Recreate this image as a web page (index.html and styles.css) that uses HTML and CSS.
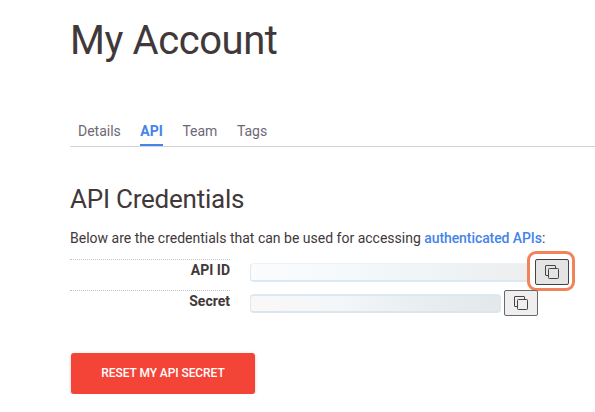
FILE: index.html
```html
<!DOCTYPE html>
<html lang="en">
<head>
<meta charset="utf-8">
<title>My Account</title>
<link rel="stylesheet" href="styles.css">
</head>
<body>
<main class="page">
  <h1 class="title">My Account</h1>
  <nav class="tabs">
    <a class="tab">Details</a>
    <a class="tab active">API</a>
    <a class="tab">Team</a>
    <a class="tab">Tags</a>
  </nav>
  <h2 class="subtitle">API Credentials</h2>
  <p class="intro">Below are the credentials that can be used for accessing <a class="link">authenticated APIs</a>:</p>
  <dl class="credentials">
    <dt class="label">API ID</dt>
    <dd class="value">
      <span class="masked masked-id"></span>
      <button class="copy pressed" aria-label="Copy API ID">
        <svg width="14" height="14" viewBox="0 0 14 14"><path d="M3.5 10.5H1a.5.5 0 0 1-.5-.5V1a.5.5 0 0 1 .5-.5h9a.5.5 0 0 1 .5.5v2.500"/><rect x="3.500" y="3.500" width="10" height="10" rx="0.800"/></svg>
        <span class="highlight"></span>
      </button>
    </dd>
    <dt class="label">Secret</dt>
    <dd class="value">
      <span class="masked masked-secret"></span>
      <button class="copy" aria-label="Copy secret">
        <svg width="14" height="14" viewBox="0 0 14 14"><path d="M3.5 10.5H1a.5.5 0 0 1-.5-.5V1a.5.5 0 0 1 .5-.5h9a.5.5 0 0 1 .5.5v2.500"/><rect x="3.500" y="3.500" width="10" height="10" rx="0.800"/></svg>
      </button>
    </dd>
  </dl>
  <button class="reset">RESET MY API SECRET</button>
</main>
</body>
</html>
```

FILE: styles.css
```css
* { box-sizing: border-box; }
body {
  margin: 0;
  background: #fff;
  color: #413839;
  font: 14px/20px Roboto, sans-serif;
  overflow: hidden;
}
.page { padding: 17px 0 0 70px; }
.title {
  margin: 0 0 56px;
  font-size: 40px;
  line-height: 48px;
  font-weight: 400;
  letter-spacing: -0.43px;
}
.tabs {
  display: flex;
  gap: 19.5px;
  height: 26px;
  padding-left: 8px;
  border-bottom: 1px solid #d4d4d4;
  color: #6c6874;
}
.tab { height: 25px; }
.active {
  color: #4484ea;
  font-weight: 700;
  border-bottom: 2px solid #4484ea;
}
.subtitle {
  margin: 36px 0 13px;
  font-size: 26px;
  line-height: 32px;
  font-weight: 400;
  letter-spacing: -0.23px;
}
.intro { margin: 0; }
.link { color: #4484ea; font-weight: 500; letter-spacing: -0.08px; }
.credentials {
  display: grid;
  grid-template-columns: 160px auto;
  grid-auto-rows: 31px;
  column-gap: 20px;
  margin: 11px 0 32px;
}
.label {
  height: 22px;
  border-top: 1px dotted #c4c4c4;
  text-align: right;
  font-weight: 700;
}
.value {
  display: flex;
  align-items: flex-start;
  gap: 3px;
  margin: 0;
}
.masked {
  height: 19px;
  margin-top: 4px;
  border-radius: 4px;
}
.masked-id {
  width: 279px;
  margin-right: 3px;
  border-radius: 4px 0 0 4px;
  border-left: 1px solid #dce9f2;
  border-bottom: 2px solid #dae8f1;
  border-top: 1px solid #edf3f6;
  background: linear-gradient(90deg, #fbfcfd, #f4f9fc 35%, #eef3f5 70%, #eeeeee);
}
.masked-secret {
  width: 251px;
  border-left: 1px solid #dce9f2;
  border-top: 2px solid #dae8f1;
  border-bottom: 2px solid #dce5eb;
  background: linear-gradient(90deg, #fbf7f7, #f3f7f9 35%, #e8edef 70%, #e3e8eb);
}
.copy {
  position: relative;
  width: 34px;
  height: 26px;
  padding: 0 0 0 9px;
  border: 1px solid #68686a;
  border-radius: 2px;
  background: #efefef;
  text-align: left;
}
.copy svg {
  display: block;
  fill: none;
  stroke: #4a4344;
  stroke-width: 1;
}
.pressed { background: #e4e4e4; border-color: #414343; }
.highlight {
  position: absolute;
  inset: -9px -7px -7px -9px;
  border: 3px solid #f1835c;
  border-radius: 9px;
}
.reset {
  display: block;
  width: 184px;
  height: 41px;
  margin-left: 1px;
  padding: 0;
  border: 0;
  border-radius: 3px;
  background: #f44438;
  box-shadow: 0 1px 3px rgba(120, 50, 40, 0.3);
  color: #fff;
  font: 500 12px/41px Roboto, sans-serif;
  letter-spacing: -0.08px;
}
```
